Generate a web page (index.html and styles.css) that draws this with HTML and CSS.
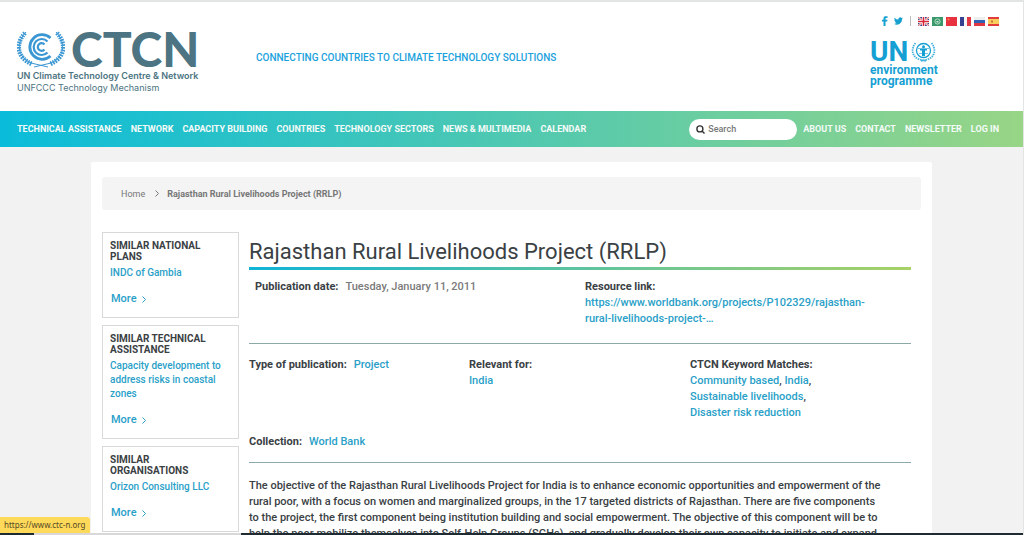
FILE: index.html
```html
<!DOCTYPE html>
<html lang="en">
<head>
<meta charset="utf-8">
<title>Rajasthan Rural Livelihoods Project (RRLP)</title>
<link rel="stylesheet" href="styles.css">
</head>
<body>
<div class="viewport">
<header class="header">
  <a class="brand" href="#" aria-label="CTCN home">
    <span class="brand-top">
      <svg class="emblem" viewBox="0 0 48 38" width="48" height="38" fill="none" stroke="#3b97d3" aria-hidden="true">
        <path d="M33.500 8A12.300 12.300 0 1 0 33.500 26" stroke-width="2.800"/>
        <path d="M30.500 11.500A8 8 0 1 0 30.500 22.500" stroke-width="2.200"/>
        <path d="M27.500 14.500A3.800 3.800 0 1 0 27.500 19.500" stroke-width="2.200"/>
        <path d="M9 2C-1 12 0 27 14 33L31 37M39 2C49 12 48 27 34 33L17 37" stroke-width="1"/>
        <path d="M8 3C-2 14 0 28 15 34M40 3C50 14 48 28 33 34" stroke-width="4.500" stroke-dasharray="1.600 1"/>
      </svg>
      <span class="brand-name">CTCN</span>
    </span>
    <span class="brand-line strong">UN Climate Technology Centre &amp; Network</span>
    <span class="brand-line">UNFCCC Technology Mechanism</span>
  </a>
  <p class="slogan">CONNECTING COUNTRIES TO CLIMATE TECHNOLOGY SOLUTIONS</p>
  <div class="header-right">
    <div class="links">
      <a href="#" aria-label="Facebook"><svg width="6" height="10" viewBox="0 0 6 10"><path fill="#16a0cf" d="M1.500 10V5.500H0V3.700h1.500V2.500C1.500.8 2.400.2 3.800.2H5.500V2H4.400c-.7 0-.9.300-.9.800v.9h2L5.200 5.500H3.500V10z"/></svg></a>
      <a class="tw" href="#" aria-label="Twitter"><svg width="9" height="8" viewBox="0 0 24 20"><path fill="#16a0cf" d="M24 2.400a10 10 0 0 1-2.800.8A5 5 0 0 0 23.300.5a10 10 0 0 1-3.100 1.200 4.900 4.900 0 0 0-8.400 4.500A14 14 0 0 1 1.700 1a4.900 4.900 0 0 0 1.500 6.600 5 5 0 0 1-2.200-.6 4.900 4.900 0 0 0 3.900 4.900 5 5 0 0 1-2.200.1 4.900 4.900 0 0 0 4.600 3.400A10 10 0 0 1 0 17.500 14 14 0 0 0 21.500 5z"/></svg></a>
      <span class="sep"></span>
      <a href="#" aria-label="English"><svg width="11" height="9" viewBox="0 0 11 9"><path fill="#3b4787" d="M0 0h11v9H0z"/><path stroke="#fff" stroke-width="2" d="M0 0l11 9M11 0L0 9"/><path stroke="#d33" stroke-width=".8" d="M0 0l11 9M11 0L0 9"/><path stroke="#fff" stroke-width="3" d="M5.500 0v9M0 4.500h11"/><path stroke="#d7263a" stroke-width="1.600" d="M5.500 0v9M0 4.500h11"/></svg></a>
      <a href="#" aria-label="Arabic"><svg width="11" height="9" viewBox="0 0 11 9"><path fill="#39996b" d="M0 0h11v9H0z"/><circle cx="5.500" cy="4.500" r="2.600" fill="none" stroke="#d4eadf" stroke-width=".8"/><path d="M4.500 4h2v1.500h-2z" fill="#d4eadf"/></svg></a>
      <a href="#" aria-label="Chinese"><svg width="11" height="9" viewBox="0 0 11 9"><path fill="#e8323f" d="M0 0h11v9H0z"/><circle cx="2.500" cy="2.500" r="1" fill="#f38a4b"/></svg></a>
      <a href="#" aria-label="French"><svg width="11" height="9" viewBox="0 0 11 9"><path fill="#f7f7f7" d="M0 0h11v9H0z"/><path fill="#36418f" d="M0 0h4v9H0z"/><path fill="#e23a45" d="M7 0h4v9H7z"/></svg></a>
      <a href="#" aria-label="Russian"><svg width="11" height="9" viewBox="0 0 11 9"><path fill="#efefef" d="M0 0h11v3H0z"/><path fill="#2f62b5" d="M0 3h11v3H0z"/><path fill="#df3944" d="M0 6h11v3H0z"/></svg></a>
      <a href="#" aria-label="Spanish"><svg width="11" height="9" viewBox="0 0 11 9"><path fill="#e23c3c" d="M0 0h11v9H0z"/><path fill="#fbcf5d" d="M0 2h11v5H0z"/><path fill="#c9733a" d="M3 3.500h2v2H3z"/></svg></a>
    </div>
    <a class="unep" href="#">
      <span class="unep-top">UN
        <svg width="25" height="22" viewBox="0 0 25 22" fill="none" stroke="#159fd3" aria-hidden="true">
          <circle cx="12.500" cy="9.500" r="7" stroke-width="1.300"/>
          <path d="M7 7.500h11M8 12.500h9" stroke-width=".6"/>
          <circle cx="12.500" cy="5.700" r="1.500" fill="#159fd3" stroke="none"/>
          <path fill="#159fd3" stroke="none" d="M9 8h7v1.500h-2V15h-3V9.500H9z"/>
          <path d="M4.500 2C-.5 8 1 16 8.500 18.500L15 20M20.500 2c5 6 3.500 14-4 16.500L10 20" stroke-width="1.800" stroke-dasharray="1.500 .8" opacity=".8"/>
        </svg>
      </span>
      <span class="unep-line">environment</span>
      <span class="unep-line">programme</span>
    </a>
  </div>
</header>
<nav class="nav">
  <a href="#">TECHNICAL ASSISTANCE</a><a href="#">NETWORK</a><a href="#">CAPACITY BUILDING</a><a href="#">COUNTRIES</a><a href="#">TECHNOLOGY SECTORS</a><a href="#">NEWS &amp; MULTIMEDIA</a><a href="#">CALENDAR</a>
  <div class="nav-right">
    <label class="search">
      <svg width="9" height="9" viewBox="0 0 9 9" fill="none" stroke="#333" stroke-width="1.400" aria-hidden="true"><circle cx="3.900" cy="3.900" r="3"/><path d="M6 6l2.500 2.500"/></svg>
      <input type="text" placeholder="Search" aria-label="Search">
    </label>
    <a href="#">ABOUT US</a><a href="#">CONTACT</a><a href="#">NEWSLETTER</a><a href="#">LOG IN</a>
  </div>
</nav>
<div class="page">
  <div class="panel">
    <div class="crumbs">
      <a href="#">Home</a>
      <svg width="4" height="7" viewBox="0 0 4 7" fill="none" stroke="#777" aria-hidden="true"><path d="M.5.500l3 3-3 3"/></svg>
      <strong>Rajasthan Rural Livelihoods Project (RRLP)</strong>
    </div>
    <div class="columns">
      <aside class="side">
        <section class="card">
          <h2>SIMILAR NATIONAL PLANS</h2>
          <a href="#">INDC of Gambia</a>
          <a class="more" href="#">More <svg width="4" height="7" viewBox="0 0 4 7" fill="none" stroke="currentColor" aria-hidden="true"><path d="M.5.500l3 3-3 3"/></svg></a>
        </section>
        <section class="card">
          <h2>SIMILAR TECHNICAL ASSISTANCE</h2>
          <a href="#">Capacity development to address risks in coastal zones</a>
          <a class="more" href="#">More <svg width="4" height="7" viewBox="0 0 4 7" fill="none" stroke="currentColor" aria-hidden="true"><path d="M.5.500l3 3-3 3"/></svg></a>
        </section>
        <section class="card">
          <h2>SIMILAR ORGANISATIONS</h2>
          <a href="#">Orizon Consulting LLC</a>
          <a class="more" href="#">More <svg width="4" height="7" viewBox="0 0 4 7" fill="none" stroke="currentColor" aria-hidden="true"><path d="M.5.500l3 3-3 3"/></svg></a>
        </section>
      </aside>
      <main class="main">
        <h1>Rajasthan Rural Livelihoods Project (RRLP)</h1>
        <div class="rule"></div>
        <div class="meta two">
          <div class="inset"><b>Publication date:</b><span class="date">Tuesday, January 11, 2011</span></div>
          <div><b>Resource link:</b><br><a href="#">https://www.worldbank.org/projects/P102329/rajasthan-<br>rural-livelihoods-project-…</a></div>
        </div>
        <div class="meta three">
          <div><b>Type of publication:</b><a class="gap" href="#">Project</a></div>
          <div><b>Relevant for:</b><br><a href="#">India</a></div>
          <div><b>CTCN Keyword Matches:</b><br><a href="#">Community based</a>, <a href="#">India</a>,<br><a href="#">Sustainable livelihoods</a>,<br><a href="#">Disaster risk reduction</a></div>
        </div>
        <div class="meta last"><b>Collection:</b><a class="gap" href="#">World Bank</a></div>
        <p class="text">The objective of the Rajasthan Rural Livelihoods Project for India is to enhance economic opportunities and empowerment of the<br>rural poor, with a focus on women and marginalized groups, in the 17 targeted districts of Rajasthan. There are five components<br>to the project, the first component being institution building and social empowerment. The objective of this component will be to<br>help the poor mobilize themselves into Self-Help Groups (SGHs), and gradually develop their own capacity to initiate and expand</p>
      </main>
    </div>
  </div>
</div>
<div class="taskbar"><span class="taskbar-light"></span></div>
<div class="status">https://www.ctc-n.org</div>
</div>
</body>
</html>
```
FILE: styles.css
```css
* { box-sizing: border-box; }
body { margin: 0; font-family: Roboto, "Liberation Sans", sans-serif; font-size: 11px; color: #3a4144; }
a { color: #2a9fc8; text-decoration: none; }
h1, h2, p { margin: 0; }
svg { display: block; flex: none; }
.viewport { height: 100vh; display: flex; flex-direction: column; overflow: hidden; position: relative; border-top: 2px solid #e3e5e5; border-right: 1px solid #e3e5e5; }
.header { flex: none; height: 109px; display: flex; align-items: flex-start; padding: 14px 23px 0 17px; background: #fff; }
.brand { display: block; width: 239px; padding-top: 14px; color: #4c7482; font-family: Inter, sans-serif; white-space: nowrap; }
.brand-top { display: flex; align-items: flex-start; gap: 6px; height: 40px; }
.brand-name { font-family: Lato, sans-serif; font-weight: 900; font-size: 48px; line-height: 38px; }
.brand-line { display: block; font-size: 9px; line-height: 12px; }
.brand-line.strong { font-weight: 600; }
.slogan { padding-top: 35px; font-size: 10px; line-height: 14px; font-weight: 500; color: #1ba1dc; white-space: nowrap; }
.header-right { width: 130px; margin-left: auto; }
.links { display: flex; align-items: center; gap: 3px; height: 10px; padding-left: 12px; }
.tw { margin: 0 4px 0 3px; }
.sep { width: 1px; height: 10px; background: #bbb; margin-right: 4px; }
.unep { display: block; padding-top: 12px; color: #159fd3; font-weight: 700; }
.unep-top { display: flex; align-items: center; gap: 3px; height: 27px; font-size: 28px; line-height: 27px; }
.unep-line { display: block; font-size: 12px; line-height: 11px; }
.nav { flex: none; height: 36px; display: flex; align-items: center; gap: 9px; padding: 0 24px 0 17px; background: linear-gradient(90deg, #0abcda, #3ec5bb 38%, #68cda2 67%, #98d586); white-space: nowrap; }
.nav a { color: #f4fbf8; font-weight: 700; font-size: 9px; }
.nav-right { margin-left: auto; display: flex; align-items: center; gap: 9px; }
.search { display: flex; align-items: center; gap: 3px; width: 108px; height: 21px; border-radius: 11px; background: #fff; padding: 0 7px; margin-right: -3px; }
.search input { border: 0; outline: 0; background: none; padding: 0; min-width: 0; width: 100%; font: 500 9px Roboto, sans-serif; }
.search input::placeholder { color: #777; }
.page { flex: 1; min-height: 0; overflow: hidden; background: #f2f2f2; padding: 15px 91px 0; }
.panel { background: #fff; border-radius: 2px; padding: 15px 11px; }
.crumbs { display: flex; align-items: center; gap: 10px; height: 33px; padding: 0 19px; background: #f4f4f4; border-radius: 3px; color: #777; font-size: 9px; }
.crumbs a { color: #777; }
.crumbs strong { margin-left: -2px; }
.columns { display: flex; gap: 10px; padding: 22px 10px 0 0; }
.side { width: 137px; flex: none; display: flex; flex-direction: column; gap: 7px; }
.card { border: 1px solid #d9d9d9; padding: 7px 7px 11px; font-size: 10px; line-height: 14px; font-weight: 500; }
.card h2 { font-size: 10px; line-height: 11px; font-weight: 700; margin-bottom: 4px; padding-right: 16px; }
.card a { display: block; }
.card .more { display: flex; align-items: center; gap: 5px; margin: 12px 0 0 1px; font-size: 11px; }
.main { flex: 1; min-width: 0; line-height: 16px; font-weight: 500; }
h1 { font-size: 22px; line-height: 29px; font-weight: 400; padding-top: 5px; }
.rule { height: 3px; margin-top: 1px; background: linear-gradient(90deg, #0fb4d6, #6cc694 60%, #a8d166); }
b { font-weight: 700; }
.meta { display: grid; }
.two { grid-template-columns: 336fr 326fr; padding: 9px 0 16px; border-bottom: 1px solid #8da9a5; }
.inset { padding-left: 6px; }
.date { margin-left: 7px; color: #7a7a7a; }
.gap { margin-left: 7px; }
.three { grid-template-columns: 220fr 221fr 221fr; padding: 13px 0; }
.last { display: block; padding-bottom: 12px; border-bottom: 1px solid #8da9b0; }
.text { padding-top: 15px; }
.taskbar { flex: none; height: 2px; background: #1f2b33; padding-left: 34px; }
.taskbar-light { display: block; width: 207px; height: 2px; background: #d8d8d8; }
.status { position: absolute; left: 0; bottom: 2px; height: 16px; padding: 0 5px 0 4px; border-radius: 0 3px 0 0; background: #ffd95a; color: #544a26; font: 8px/16px "Noto Sans", sans-serif; }
```
